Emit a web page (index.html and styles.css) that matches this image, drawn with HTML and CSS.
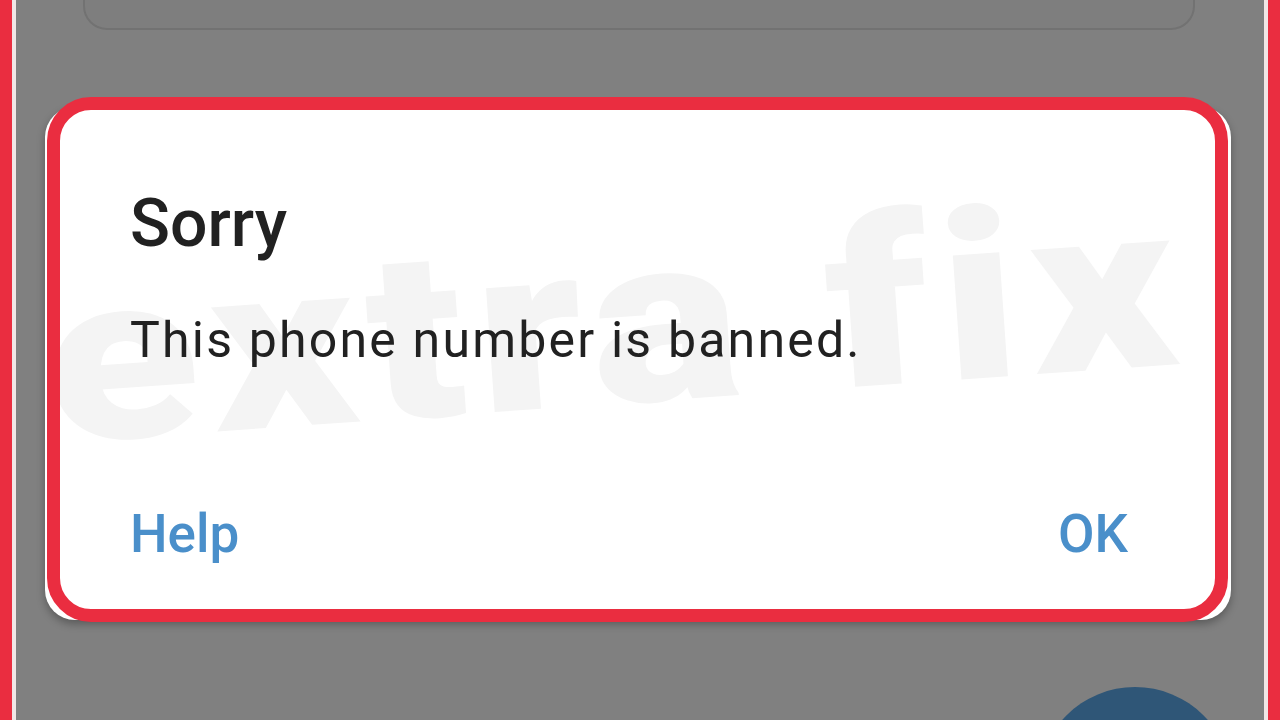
FILE: index.html
```html
<!DOCTYPE html>
<html lang="en">
<head>
  <meta charset="UTF-8">
  <meta name="viewport" content="width=device-width,initial-scale=1.0">
  <title>Sorry - banned number</title>
  <link rel="stylesheet" href="styles.css">
</head>
<body>
  <div class="rail rail-left"></div>
  <div id="screen">
    <div class="topCard"></div>
    <div class="dialog">
      <div class="watermark">extra fix</div>
      <h1 class="title">Sorry</h1>
      <p class="message">This phone number is banned.</p>
      <div class="actions">
        <button type="button">Help</button>
        <button type="button">OK</button>
      </div>
    </div>
    <div class="highlight"></div>
    <div class="fab"></div>
  </div>
  <div class="rail rail-right"></div>
</body>
</html>
```

FILE: styles.css
```css
html,body
{
  margin:0;
  height:720px;
  overflow:hidden;
}
body
{
  display:flex;
  background-color:#808080;
  font-family:Roboto,"Noto Sans",sans-serif;
}
.rail
{
  width:12px;
  background-color:#ea2d40;
  flex:none;
}
.rail-left
{
  border-right:4px solid #f1e6e6;
}
.rail-right
{
  border-left:4px solid #f1e6e6;
}
#screen
{
  flex:1;
  position:relative;
  overflow:hidden;
}
.topCard
{
  height:60px;
  margin:-30px 69px 0 67px;
  border:2px solid #727272;
  border-radius:24px;
  box-sizing:border-box;
  background-color:#7e7e7e;
}
.dialog
{
  position:relative;
  height:513px;
  margin:77px 33px 0 29px;
  padding:84px 103px 0 85px;
  box-sizing:border-box;
  background-color:#fff;
  border-radius:30px;
  box-shadow:0 4px 8px rgba(0,0,0,0.3);
  overflow:hidden;
}
.watermark
{
  position:absolute;
  left:8px;
  top:138px;
  font-size:235px;
  font-weight:900;
  line-height:1;
  letter-spacing:10px;
  word-spacing:-6px;
  color:#f4f4f4;
  transform:rotate(-4deg) scaleX(1.2);
  transform-origin:left bottom;
  white-space:nowrap;
}
.title,.message,.actions
{
  position:relative;
}
.title
{
  margin:0;
  font-size:66px;
  font-weight:500;
  line-height:1;
  color:#212121;
}
.message
{
  margin:58px 0 0;
  font-size:50px;
  line-height:1;
  letter-spacing:2.2px;
  color:#212121;
}
.actions
{
  display:flex;
  justify-content:space-between;
  margin-top:143px;
}
.actions button
{
  padding:0;
  border:none;
  background:none;
  font-family:inherit;
  font-size:53px;
  font-weight:500;
  line-height:1;
  color:#4a8fca;
  cursor:pointer;
}
.highlight
{
  position:absolute;
  left:31px;
  top:97px;
  width:1181px;
  height:525px;
  border:13px solid #ea2d40;
  border-radius:44px;
  box-sizing:border-box;
}
.fab
{
  position:absolute;
  left:1022px;
  top:687px;
  width:194px;
  height:194px;
  border-radius:50%;
  background-color:#2f5677;
}
```
